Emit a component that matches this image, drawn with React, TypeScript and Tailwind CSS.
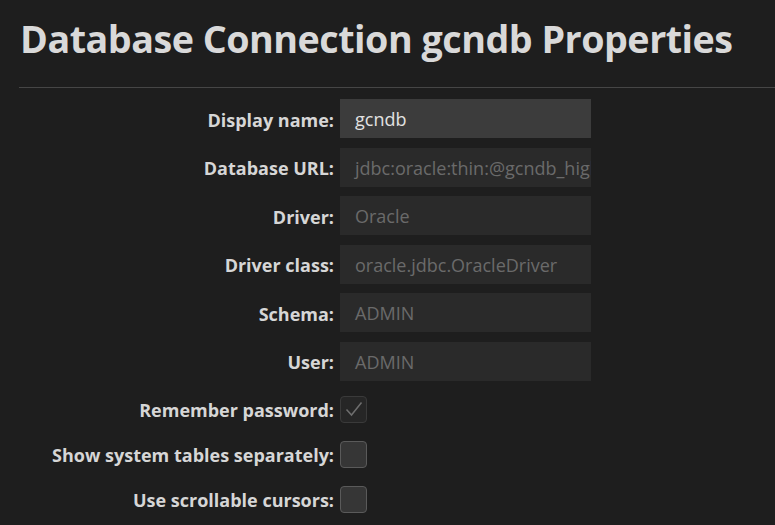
import React from 'react';

const fields = [
  { label: 'Display name:', value: 'gcndb', active: true },
  { label: 'Database URL:', value: 'jdbc:oracle:thin:@gcndb_high' },
  { label: 'Driver:', value: 'Oracle' },
  { label: 'Driver class:', value: 'oracle.jdbc.OracleDriver' },
  { label: 'Schema:', value: 'ADMIN' },
  { label: 'User:', value: 'ADMIN' },
];

const checks = [
  { label: 'Remember password:', checked: true },
  { label: 'Show system tables separately:', checked: false },
  { label: 'Use scrollable cursors:', checked: false },
];

const App: React.FC = () => {
  return (
    <div
      className="w-[775px] h-[525px] overflow-hidden bg-[#1e1e1e] text-[#d6d6d6]"
      style={{ fontFamily: '"Open Sans", "Noto Sans", sans-serif' }}
    >
      <h1 className="pl-[20px] pt-[13px] h-[87px] text-[37.7px] font-bold leading-[52px] tracking-[-0.5px] text-[#d9d9d9] whitespace-nowrap">
        Database Connection gcndb Properties
      </h1>
      <div className="ml-[19px] h-px bg-[#464646]" />

      <div className="mt-[11px] flex flex-col gap-[9.6px]">
        {fields.map((f) => (
          <div key={f.label} className="flex items-center gap-[6px] h-[39px]">
            <div className="w-[334px] pt-[3px] text-right text-[18px] font-bold text-[#d6d6d6]">{f.label}</div>
            <div
              className={`w-[251px] h-[39px] flex items-center pl-[15px] pt-[2px] overflow-hidden whitespace-nowrap text-[18px] ${
                f.active ? 'bg-[#3c3c3c] text-[#e2e2e2]' : 'bg-[#2a2a2a] text-[#6a6a6a]'
              }`}
            >
              {f.value}
            </div>
          </div>
        ))}
      </div>

      <div className="mt-[15px] flex flex-col gap-[18px]">
        {checks.map((c) => (
          <div key={c.label} className="flex items-center gap-[6px] h-[27px]">
            <div className="w-[334px] pt-[2px] text-right text-[18px] font-bold text-[#d6d6d6] whitespace-nowrap">{c.label}</div>
            <div
              className={`w-[27px] h-[27px] rounded-[4px] border flex items-center justify-center ${
                c.checked ? 'bg-[#262626] border-[#3a3a3a]' : 'bg-[#363636] border-[#5a5a5a]'
              }`}
            >
              {c.checked && (
                <svg width="20" height="20" viewBox="0 0 20 20" fill="none">
                  <path d="M2.5 10.5 L7.5 16 L17.5 3.5" stroke="#6e6e6e" strokeWidth="1.5" />
                </svg>
              )}
            </div>
          </div>
        ))}
      </div>
    </div>
  );
};

export default App;
